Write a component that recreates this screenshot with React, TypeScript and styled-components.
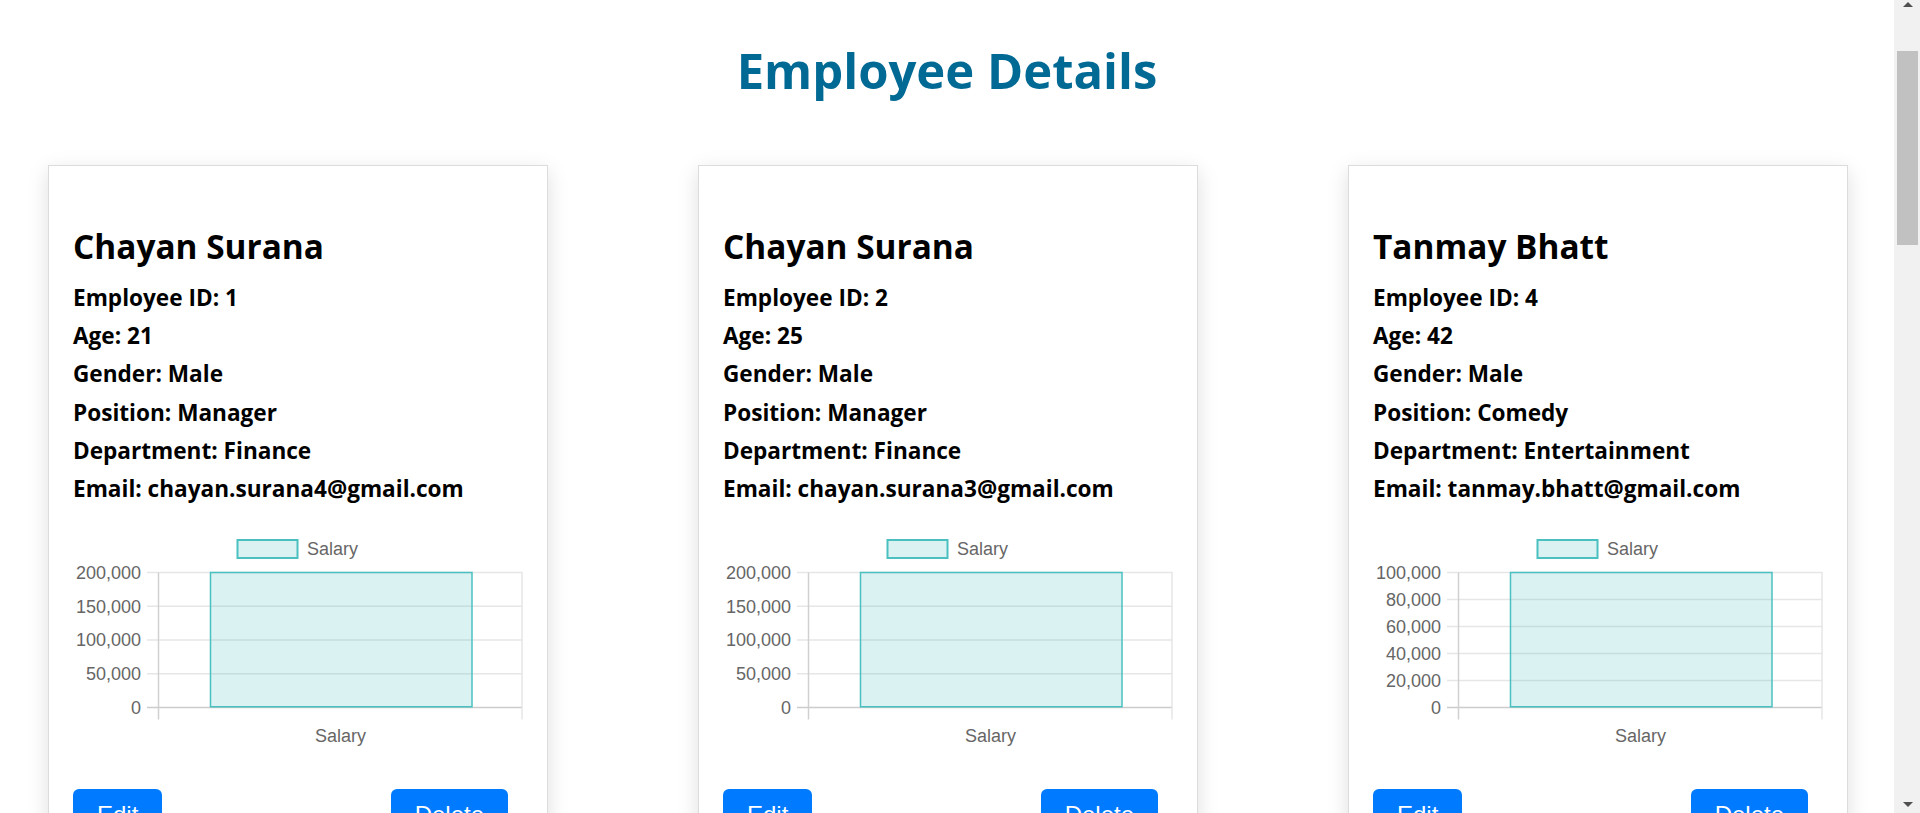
import React from 'react';
import styled, { createGlobalStyle } from 'styled-components';

const GlobalStyle = createGlobalStyle`
  body {
    margin: 0;
    background: #ffffff;
    color: #000000;
    font-family: 'Open Sans', 'Noto Sans', sans-serif;
  }
`;

const Page = styled.div`
  box-sizing: border-box;
  width: 1894px;
  padding-top: 38.3px;
  padding-bottom: 40px;
`;

const Title = styled.h1`
  margin: 0;
  text-align: center;
  font-size: 49px;
  line-height: 64px;
  font-weight: 700;
  color: #006994;
`;

const CardGrid = styled.div`
  display: grid;
  grid-template-columns: repeat(3, 500px);
  column-gap: 150px;
  row-gap: 60px;
  padding-left: 48px;
  margin-top: 62.7px;
`;

const Card = styled.div`
  box-sizing: border-box;
  width: 500px;
  background: #ffffff;
  border: 1px solid #dcdcdc;
  box-shadow: 0 6px 20px rgba(0, 0, 0, 0.13);
  padding: 24px;
`;

const Name = styled.h2`
  margin: 32px 0 0;
  font-size: 33.4px;
  line-height: 48px;
  font-weight: 700;
`;

const DetailList = styled.div`
  display: flex;
  flex-direction: column;
  margin-top: 9.3px;
`;

const Detail = styled.p`
  margin: 0;
  font-size: 22.6px;
  line-height: 38.1px;
  font-weight: 700;
  white-space: nowrap;
`;

const ChartBox = styled.div`
  margin-top: 16.5px;
  height: 225px;
  svg { display: block; }
`;

const ButtonRow = styled.div`
  display: flex;
  justify-content: space-between;
  margin-top: 40px;
`;

const ActionButton = styled.button`
  margin-right: 15px;
  padding: 12px 24px;
  border: none;
  border-radius: 6px;
  background: #007bff;
  color: #ffffff;
  font-family: 'Liberation Sans', Arial, sans-serif;
  font-size: 24px;
  line-height: 27.6px;
  cursor: pointer;
`;

/* Browser scrollbar as drawn in the reference (headless capture hides the native one) */
const ScrollRail = styled.div`
  position: fixed;
  top: 0;
  right: 0;
  width: 26px;
  height: 100vh;
  background: #f1f1f1;
  display: flex;
  flex-direction: column;
  align-items: center;
  justify-content: space-between;
  padding: 2px 0 6px;
  box-sizing: border-box;
`;

const Arrow = styled.span<{ $down?: boolean }>`
  width: 0;
  height: 0;
  margin-left: 1px;
  border-left: 5px solid transparent;
  border-right: 5px solid transparent;
  ${(p) => (p.$down ? 'border-top: 5px solid #505050;' : 'border-bottom: 5px solid #505050;')}
`;

const Thumb = styled.div`
  position: absolute;
  top: 51px;
  left: 3px;
  right: 2px;
  height: 194px;
  background: #c1c1c1;
`;

type Employee = {
  name: string;
  id: number;
  age: number;
  gender: string;
  position: string;
  department: string;
  email: string;
  salary: number;
  max: number;
  step: number;
};

const employees: Employee[] = [
  { name: 'Chayan Surana', id: 1, age: 21, gender: 'Male', position: 'Manager', department: 'Finance', email: 'chayan.surana4@gmail.com', salary: 200000, max: 200000, step: 50000 },
  { name: 'Chayan Surana', id: 2, age: 25, gender: 'Male', position: 'Manager', department: 'Finance', email: 'chayan.surana3@gmail.com', salary: 200000, max: 200000, step: 50000 },
  { name: 'Tanmay Bhatt', id: 4, age: 42, gender: 'Male', position: 'Comedy', department: 'Entertainment', email: 'tanmay.bhatt@gmail.com', salary: 100000, max: 100000, step: 20000 },
];

const TEAL = 'rgb(75,192,192)';
const TEAL_FILL = 'rgba(75,192,192,0.2)';
const FONT = "'Liberation Sans', Arial, sans-serif";

const SalaryChart: React.FC<{ salary: number; max: number; step: number }> = ({ salary, max, step }) => {
  const W = 450;
  const top = 48.5;
  const bottom = 183.5;
  const left = 85.5;
  const right = 449.5;
  const ticks: number[] = [];
  for (let v = max; v >= 0; v -= step) ticks.push(v);
  const yOf = (v: number) => bottom - (v / max) * (bottom - top);
  const barTop = yOf(salary);
  return (
    <svg width={W} height={225} viewBox={`0 0 ${W} 225`}>
      <rect x={164.5} y={16} width={60} height={18} fill={TEAL_FILL} stroke={TEAL} strokeWidth={2} />
      <text x={234} y={30.5} fontFamily={FONT} fontSize={18} fill="#666">Salary</text>
      {ticks.map((v) => {
        const y = yOf(v);
        const zero = v === 0;
        return (
          <g key={v}>
            <line x1={74} x2={right} y1={y} y2={y} stroke={zero ? '#cccccc' : '#e6e6e6'} strokeWidth={1.5} />
            <text x={68} y={y + 6.3} textAnchor="end" fontFamily={FONT} fontSize={18} fill="#666">
              {v.toLocaleString('en-US')}
            </text>
          </g>
        );
      })}
      <line x1={left} x2={left} y1={top} y2={bottom + 12} stroke="#d0d0d0" strokeWidth={1.5} />
      <line x1={right - 0.5} x2={right - 0.5} y1={top} y2={bottom + 12} stroke="#e6e6e6" strokeWidth={1.5} />
      <rect x={137.5} y={barTop} width={261.5} height={bottom - barTop - 0.75} fill={TEAL_FILL} stroke={TEAL} strokeWidth={1.5} />
      <text x={267.5} y={217.7} textAnchor="middle" fontFamily={FONT} fontSize={18} fill="#666">Salary</text>
    </svg>
  );
};

const EmployeeCard: React.FC<{ e: Employee }> = ({ e }) => (
  <Card>
    <Name>{e.name}</Name>
    <DetailList>
      <Detail>Employee ID: {e.id}</Detail>
      <Detail>Age: {e.age}</Detail>
      <Detail>Gender: {e.gender}</Detail>
      <Detail>Position: {e.position}</Detail>
      <Detail>Department: {e.department}</Detail>
      <Detail>Email: {e.email}</Detail>
    </DetailList>
    <ChartBox>
      <SalaryChart salary={e.salary} max={e.max} step={e.step} />
    </ChartBox>
    <ButtonRow>
      <ActionButton>Edit</ActionButton>
      <ActionButton>Delete</ActionButton>
    </ButtonRow>
  </Card>
);

export default function App() {
  return (
    <>
      <GlobalStyle />
      <Page>
        <Title>Employee Details</Title>
        <CardGrid>
          {employees.map((e) => (
            <EmployeeCard key={e.id} e={e} />
          ))}
        </CardGrid>
      </Page>
      <ScrollRail aria-hidden="true">
        <Arrow />
        <Thumb />
        <Arrow $down />
      </ScrollRail>
    </>
  );
}
